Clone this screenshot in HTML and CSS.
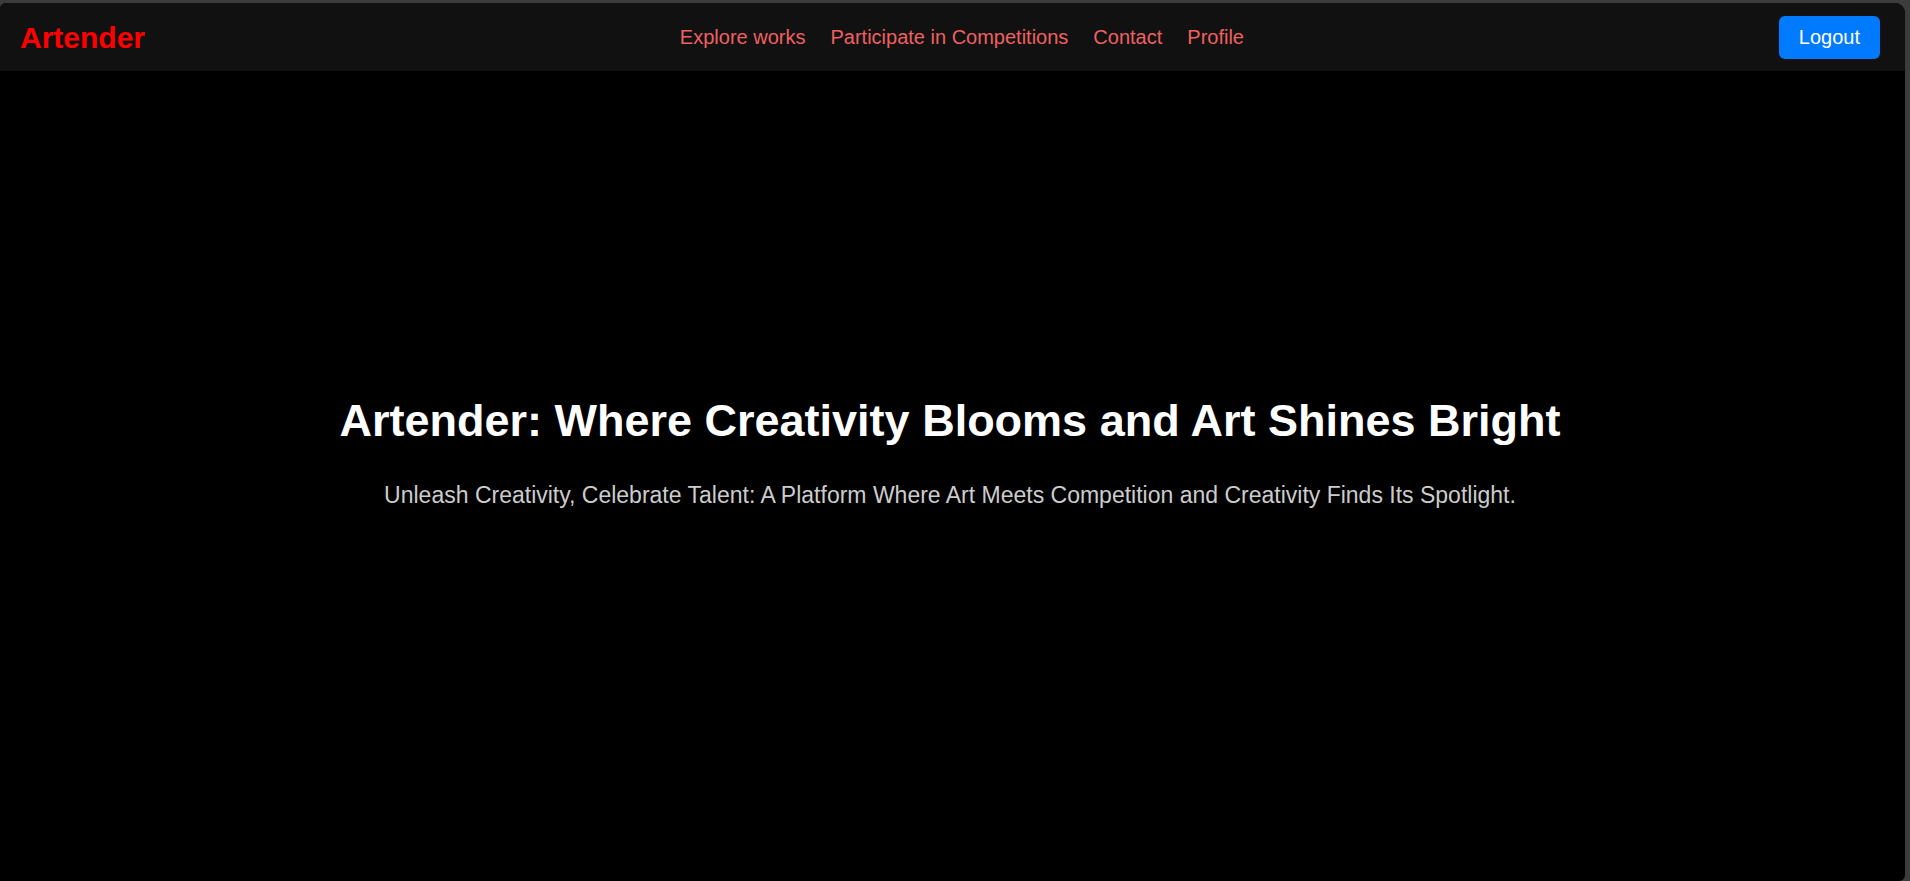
FILE: index.html
```html
<!DOCTYPE html>
<html lang="en">
<head>
<meta charset="utf-8">
<title>Artender</title>
<link rel="stylesheet" href="styles.css">
</head>
<body>
<div class="window">
  <header class="navbar">
    <a class="logo" href="#">Artender</a>
    <nav class="links">
      <a href="#">Explore works</a>
      <a href="#">Participate in Competitions</a>
      <a href="#">Contact</a>
      <a href="#">Profile</a>
    </nav>
    <button class="logout" type="button">Logout</button>
  </header>
  <main class="hero">
    <h1>Artender: Where Creativity Blooms and Art Shines Bright</h1>
    <p>Unleash Creativity, Celebrate Talent: A Platform Where Art Meets Competition and Creativity Finds Its Spotlight.</p>
  </main>
</div>
</body>
</html>
```
FILE: styles.css
```css
* {
  box-sizing: border-box;
}

body {
  margin: 0;
  padding: 3px 5px 0 0;
  min-height: 100vh;
  display: flex;
  background: #3c3c3c;
  font-family: "Liberation Sans", Arial, sans-serif;
}

.window {
  flex: 1;
  display: flex;
  flex-direction: column;
  overflow: hidden;
  border-radius: 6px 10px 6px 0;
  background: #000;
}

.navbar {
  display: flex;
  justify-content: space-between;
  align-items: center;
  padding: 13px 25px 12px 20px;
  background: #111;
}

.logo {
  color: #f00;
  font-size: 30px;
  line-height: 36px;
  font-weight: bold;
  text-decoration: none;
}

.links {
  display: flex;
  gap: 25px;
}

.links a {
  color: #f06060;
  font-size: 20px;
  line-height: 23px;
  text-decoration: none;
}

.logout {
  padding: 10px 20px;
  border: 0;
  border-radius: 6px;
  background: #007bff;
  color: #fff;
  font-family: inherit;
  font-size: 20px;
  line-height: 23px;
}

.hero {
  flex: 1;
  display: flex;
  flex-direction: column;
  align-items: center;
  justify-content: center;
  gap: 35px;
  padding: 0 30px 50px 25px;
  text-align: center;
}

.hero h1 {
  margin: 0;
  color: #fff;
  font-size: 45px;
  line-height: 52px;
}

.hero p {
  margin: 0;
  color: #ccc;
  font-size: 23px;
  line-height: 26px;
}
```
